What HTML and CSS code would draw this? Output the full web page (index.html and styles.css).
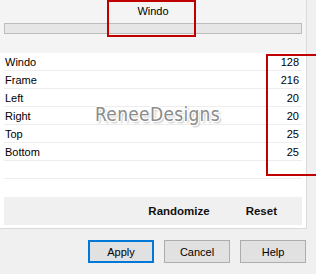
FILE: index.html
```html
<!DOCTYPE html>
<html lang="en">
<head>
    <meta charset="UTF-8">
    <title>Windo</title>
    <link rel="stylesheet" href="styles.css">
</head>
<body>
    <div class="dialog">
        <div class="panel">
            <div class="top">
                <div class="title">Windo</div>
                <div class="slider"></div>
            </div>
            <div class="rows">
                <div class="row"><span>Windo</span><span>128</span></div>
                <div class="row"><span>Frame</span><span>216</span></div>
                <div class="row"><span>Left</span><span>20</span></div>
                <div class="row"><span>Right</span><span>20</span></div>
                <div class="row"><span>Top</span><span>25</span></div>
                <div class="row"><span>Bottom</span><span>25</span></div>
                <div class="row"></div>
            </div>
            <div class="actions">
                <span class="action">Randomize</span>
                <span class="action">Reset</span>
            </div>
        </div>
        <div class="side"></div>
    </div>

    <div class="buttons">
        <button class="btn btn-default">Apply</button>
        <button class="btn">Cancel</button>
        <button class="btn">Help</button>
    </div>

    <!-- annotations over the screenshot -->
    <div class="mark mark-title"></div>
    <div class="mark mark-values"></div>
    <div class="watermark">ReneeDesigns</div>
</body>
</html>
```

FILE: styles.css
```css
* {
    margin: 0;
    padding: 0;
    box-sizing: border-box;
}

body {
    width: 316px;
    height: 274px;
    background: #f0f0f0;
    font-family: 'Liberation Sans', Arial, sans-serif;
    font-size: 11px;
    color: #000;
    position: relative;
    overflow: hidden;
}

.dialog {
    display: flex;
    height: 229px;
}

.panel {
    width: 307px;
    background: #fff;
    border-right: 1px solid #dadada;
    border-bottom: 1px solid #dadada;
    display: flex;
    flex-direction: column;
}

.side {
    flex: 1;
    background: #f0f0f0;
}

.top {
    height: 53px;
    background: #f4f4f4;
    padding: 4px 4px 0 4px;
}

.title {
    text-align: center;
    height: 19px;
    line-height: 14px;
}

.slider {
    height: 11px;
    background: #e6e6e6;
    border: 1px solid #bcbcbc;
    width: 298px;
}

.rows {
    padding: 0 4px;
}

.row {
    display: flex;
    justify-content: space-between;
    height: 18px;
    line-height: 17px;
    padding: 1px 3px 0 1px;
    border-bottom: 1px solid #ededed;
}

.actions {
    margin: 18px 4px 0 4px;
    height: 28px;
    background: #f0f0f0;
    display: flex;
    justify-content: flex-end;
    align-items: center;
    gap: 36px;
    padding-right: 25px;
}

.action {
    font-weight: bold;
    font-size: 11.5px;
    color: #111;
}

.buttons {
    display: flex;
    justify-content: flex-end;
    gap: 10px;
    padding: 11px 10px 0 0;
}

.btn {
    width: 66px;
    height: 23px;
    background: #e1e1e1;
    border: 1px solid #adadad;
    font-family: 'Liberation Sans', Arial, sans-serif;
    font-size: 11px;
    color: #000;
}

.btn-default {
    border: 2px solid #0078d7;
}

.mark {
    position: absolute;
    border: 2px solid #c00000;
}

.mark-title {
    left: 107px;
    top: 0;
    width: 89px;
    height: 37px;
}

.mark-values {
    left: 266px;
    top: 54px;
    width: 60px;
    height: 122px;
}

.watermark {
    position: absolute;
    left: 95px;
    top: 103px;
    font-family: 'DejaVu Sans Condensed', 'DejaVu Sans', sans-serif;
    font-size: 19px;
    color: #8c8c8c;
    letter-spacing: 0.3px;
    text-shadow: 1px 1px 0 #fff, -1px -1px 0 #fff, 1px -1px 0 #fff, -1px 1px 0 #fff, 2px 2px 2px #bbb;
}
```
